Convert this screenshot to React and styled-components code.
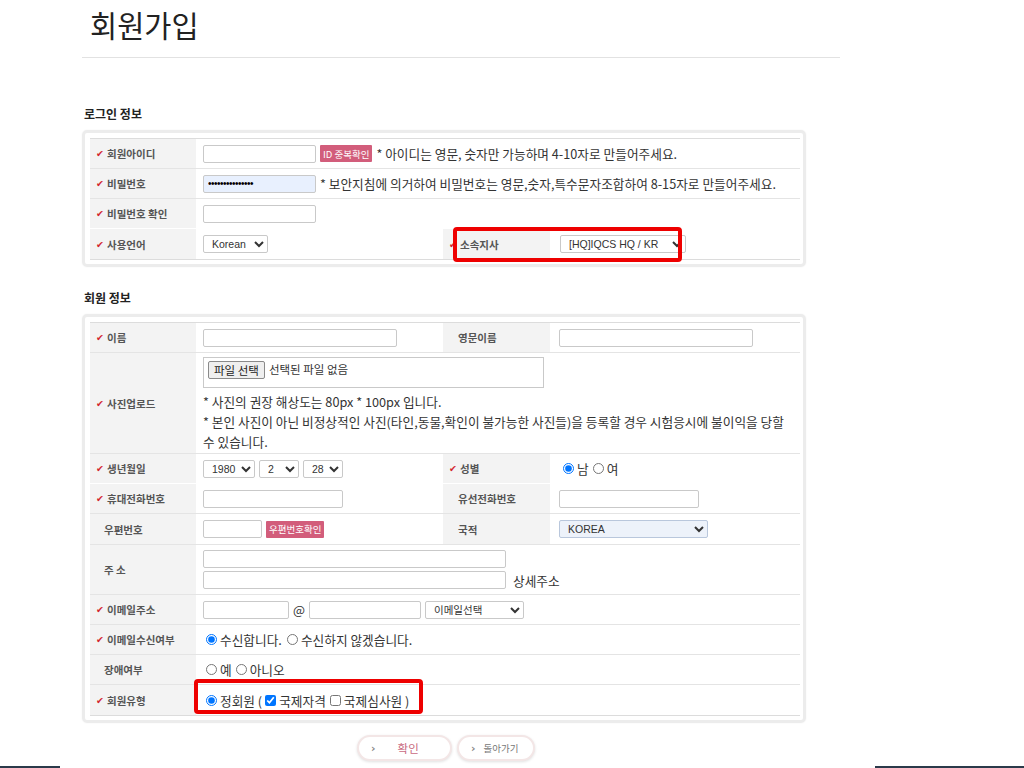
import React from 'react';
import styled, { createGlobalStyle } from 'styled-components';

const GlobalStyle = createGlobalStyle`
  html, body {
    margin: 0;
    padding: 0;
    background: #fff;
  }
  body {
    font-family: "Noto Sans CJK KR", "Noto Sans", sans-serif;
    color: #333;
  }
  * { box-sizing: border-box; }
`;

const Page = styled.div`
  width: 1024px;
  height: 768px;
  overflow: hidden;
  display: flex;
  flex-direction: column;
`;

const Content = styled.div`
  margin-left: 82px;
  width: 758px;
`;

const Title = styled.h1`
  margin: 0;
  height: 58px;
  padding: 3px 0 0 8px;
  font-size: 29.5px;
  font-weight: 400;
  color: #222;
  border-bottom: 1px solid #e2e2e2;
`;

const SectionTitle = styled.h2`
  margin: ${p => p.$top}px 0 0 2px;
  height: 24px;
  font-size: 12px;
  font-weight: 700;
  color: #222;
  line-height: 16px;
`;

const Frame = styled.div`
  width: 724px;
  border: 3px solid #ececec;
  border-radius: 5px;
  padding: 5px 3px 4px 5px;
  box-shadow: 0 0 2px rgba(0, 0, 0, 0.06);
`;

const Table = styled.div`
  border-top: 1px solid #dcdcdc;
  border-bottom: 1px solid #dcdcdc;
`;

const Row = styled.div`
  position: relative;
  display: grid;
  grid-template-columns: 106px 247px 107px 1fr;
  height: ${p => p.$h || 30}px;
  border-bottom: 1px solid ${p => (p.$noLine ? 'transparent' : '#e4e4e4')};
  &:last-child {
    border-bottom: none;
  }
`;

const Label = styled.div`
  display: flex;
  align-items: center;
  background: #f3f3f3;
  padding-left: ${p => (p.$req ? 6 : 14)}px;
  font-size: 10.5px;
  font-weight: 700;
  color: #555;
  white-space: nowrap;
`;

const SideLabel = styled(Label)`
  padding-left: ${p => (p.$req ? 6 : 15)}px;
`;

const Check = styled.span`
  font-family: "DejaVu Sans", sans-serif;
  color: #d3262f;
  font-size: 9.5px;
  width: 11px;
`;

const Field = styled.div`
  display: flex;
  align-items: center;
  gap: 4px;
  padding-left: ${p => p.$pad ?? 7}px;
  grid-column: ${p => (p.$span ? `span ${p.$span}` : 'auto')};
  font-size: 12.7px;
  color: #333;
  white-space: nowrap;
`;

const PhotoField = styled(Field)`
  flex-direction: column;
  align-items: flex-start;
  gap: 0;
  padding-top: 4px;
  white-space: normal;
`;

const AddressField = styled(Field)`
  flex-direction: column;
  align-items: flex-start;
  justify-content: center;
  gap: 3px;
`;

const Line = styled.div`
  display: flex;
  align-items: center;
  gap: 7px;
`;

const TextInput = styled.input`
  width: ${p => p.$w}px;
  height: 18px;
  border: 1px solid #c9c9c9;
  border-radius: 2px;
  background: ${p => (p.$filled ? '#e8f0fe' : '#fff')};
  font-size: 10px;
  padding: 0 4px;
  letter-spacing: ${p => (p.$filled ? '-0.5px' : '0')};
`;

const Select = styled.select`
  width: ${p => p.$w}px;
  height: 18px;
  border: 1px solid ${p => (p.$blue ? '#b9c7dc' : '#c9c9c9')};
  background: ${p => (p.$blue ? '#edf2fa' : '#fff')};
  border-radius: 2px;
  font-family: "Liberation Sans", Arial, "Noto Sans CJK KR", sans-serif;
  font-size: 10.5px;
  color: #333;
  padding: 0 2px 0 4px;
`;

const PinkButton = styled.span`
  display: inline-flex;
  align-items: center;
  height: 17px;
  padding: 0 3px;
  background: #d25d7b;
  color: #fff;
  font-size: 9.5px;
  border-radius: 1px;
`;

const Note = styled.span`
  font-size: 12.7px;
  color: #333;
`;

const FileBox = styled.div`
  width: 341px;
  height: 31px;
  border: 1px solid #c9c9c9;
  display: flex;
  align-items: flex-start;
  padding: 3px 4px;
  gap: 4px;
  font-size: 11.5px;
`;

const FileButton = styled.span`
  display: inline-flex;
  align-items: center;
  height: 18px;
  padding: 0 5px;
  border: 1px solid #8a8a8a;
  border-radius: 2px;
  background: #efefef;
  font-size: 11.5px;
  color: #222;
`;

const PhotoNotes = styled.div`
  margin-top: 4px;
  font-size: 12.7px;
  line-height: 20px;
  color: #333;
  width: 590px;
`;

const Choice = styled.label`
  display: inline-flex;
  align-items: center;
  font-size: 12.7px;
  color: #333;
  margin-right: ${p => p.$mr ?? 2}px;
  input {
    margin: 0 3px 0 ${p => p.$ml ?? 0}px;
    width: 11px;
    height: 11px;
  }
`;

const ChoiceGroup = styled(Field)`
  gap: 0;
`;

const Highlight = styled.div`
  position: absolute;
  left: ${p => p.$x}px;
  top: ${p => p.$y}px;
  width: ${p => p.$w}px;
  height: ${p => p.$h}px;
  border: 4px solid #ee0000;
  border-radius: 4px;
  pointer-events: none;
`;

const ButtonRow = styled.div`
  width: 724px;
  display: flex;
  justify-content: center;
  gap: 5px;
  margin-top: 12px;
  padding-left: 4px;
`;

const Pill = styled.div`
  width: ${p => p.$w}px;
  height: 26px;
  border: 2px solid #f3e6e6;
  border-radius: 14px;
  box-shadow: 0 1px 3px rgba(0, 0, 0, 0.12);
  display: flex;
  align-items: center;
  padding-left: 12px;
  gap: ${p => p.$gap}px;
  font-size: ${p => p.$fs}px;
  color: ${p => p.$color};
  background: #fff;
`;

const Chevron = styled.span`
  font-family: "DejaVu Sans", sans-serif;
  color: #888;
  font-size: 11px;
  font-weight: 700;
`;

const Footer = styled.div`
  margin-top: auto;
  display: flex;
  justify-content: space-between;
  height: 2px;
`;

const FooterBar = styled.div`
  width: ${p => p.$w}px;
  background: #2b3a4a;
`;

const Req = ({ children }) => (
  <>
    <Check>✔</Check>
    {children}
  </>
);

export default function App() {
  return (
    <Page>
      <GlobalStyle />
      <Content>
        <Title>회원가입</Title>

        <SectionTitle $top={48}>로그인 정보</SectionTitle>
        <Frame>
          <Table>
            <Row>
              <Label $req><Req>회원아이디</Req></Label>
              <Field $span={3}>
                <TextInput $w={113} />
                <PinkButton>ID 중복확인</PinkButton>
                <Note>* 아이디는 영문, 숫자만 가능하며 4-10자로 만들어주세요.</Note>
              </Field>
            </Row>
            <Row>
              <Label $req><Req>비밀번호</Req></Label>
              <Field $span={3}>
                <TextInput $w={113} $filled type="password" defaultValue="123456789012345" />
                <Note>* 보안지침에 의거하여 비밀번호는 영문,숫자,특수문자조합하여 8-15자로 만들어주세요.</Note>
              </Field>
            </Row>
            <Row $noLine>
              <Label $req><Req>비밀번호 확인</Req></Label>
              <Field $span={3}>
                <TextInput $w={113} />
              </Field>
            </Row>
            <Row>
              <Label $req><Req>사용언어</Req></Label>
              <Field>
                <Select $w={65} defaultValue="Korean">
                  <option>Korean</option>
                  <option>English</option>
                </Select>
              </Field>
              <SideLabel $req><Req>소속지사</Req></SideLabel>
              <Field $pad={10}>
                <Select $w={126}>
                  <option>[HQ]IQCS HQ / KR</option>
                </Select>
              </Field>
              <Highlight $x={363} $y={-2} $w={229} $h={35} />
            </Row>
          </Table>
        </Frame>

        <SectionTitle $top={23}>회원 정보</SectionTitle>
        <Frame>
          <Table>
            <Row>
              <Label $req><Req>이름</Req></Label>
              <Field><TextInput $w={194} /></Field>
              <SideLabel>영문이름</SideLabel>
              <Field $pad={9}><TextInput $w={194} /></Field>
            </Row>
            <Row $h={101}>
              <Label $req><Req>사진업로드</Req></Label>
              <PhotoField $span={3}>
                <FileBox>
                  <FileButton>파일 선택</FileButton>
                  <span>선택된 파일 없음</span>
                </FileBox>
                <PhotoNotes>
                  * 사진의 권장 해상도는 80px * 100px 입니다.<br />
                  * 본인 사진이 아닌 비정상적인 사진(타인,동물,확인이 불가능한 사진들)을 등록할 경우 시험응시에 불이익을 당할 수 있습니다.
                </PhotoNotes>
              </PhotoField>
            </Row>
            <Row $noLine>
              <Label $req><Req>생년월일</Req></Label>
              <Field>
                <Select $w={52}><option>1980</option></Select>
                <Select $w={40}><option>2</option></Select>
                <Select $w={40}><option>28</option></Select>
              </Field>
              <SideLabel $req><Req>성별</Req></SideLabel>
              <ChoiceGroup $pad={13}>
                <Choice $mr={4}><input type="radio" name="sex" defaultChecked />남</Choice>
                <Choice><input type="radio" name="sex" />여</Choice>
              </ChoiceGroup>
            </Row>
            <Row>
              <Label $req><Req>휴대전화번호</Req></Label>
              <Field><TextInput $w={140} /></Field>
              <SideLabel>유선전화번호</SideLabel>
              <Field $pad={9}><TextInput $w={140} /></Field>
            </Row>
            <Row $h={31}>
              <Label>우편번호</Label>
              <Field>
                <TextInput $w={59} />
                <PinkButton>우편번호확인</PinkButton>
              </Field>
              <SideLabel>국적</SideLabel>
              <Field $pad={9}>
                <Select $w={149} $blue><option>KOREA</option></Select>
              </Field>
            </Row>
            <Row $h={50}>
              <Label>주 소</Label>
              <AddressField $span={3}>
                <TextInput $w={303} />
                <Line>
                  <TextInput $w={303} />
                  <Note>상세주소</Note>
                </Line>
              </AddressField>
            </Row>
            <Row>
              <Label $req><Req>이메일주소</Req></Label>
              <Field $span={3}>
                <TextInput $w={86} />
                <Note>@</Note>
                <TextInput $w={112} />
                <Select $w={99}><option>이메일선택</option></Select>
              </Field>
            </Row>
            <Row>
              <Label $req><Req>이메일수신여부</Req></Label>
              <ChoiceGroup $span={3} $pad={10}>
                <Choice $mr={5}><input type="radio" name="mail" defaultChecked />수신합니다.</Choice>
                <Choice><input type="radio" name="mail" />수신하지 않겠습니다.</Choice>
              </ChoiceGroup>
            </Row>
            <Row>
              <Label>장애여부</Label>
              <ChoiceGroup $span={3} $pad={10}>
                <Choice $mr={4}><input type="radio" name="dis" />예</Choice>
                <Choice><input type="radio" name="dis" />아니오</Choice>
              </ChoiceGroup>
            </Row>
            <Row>
              <Label $req><Req>회원유형</Req></Label>
              <ChoiceGroup $span={3} $pad={10}>
                <Choice $mr={3}><input type="radio" name="type" defaultChecked />정회원 (</Choice>
                <Choice $mr={4}><input type="checkbox" defaultChecked />국제자격</Choice>
                <Choice><input type="checkbox" />국제심사원 )</Choice>
              </ChoiceGroup>
              <Highlight $x={104} $y={-6} $w={229} $h={35} />
            </Row>
          </Table>
        </Frame>

        <ButtonRow>
          <Pill $w={95} $gap={22} $fs={11.5} $color="#c96a7e">
            <Chevron>›</Chevron>확인
          </Pill>
          <Pill $w={78} $gap={8} $fs={9.5} $color="#777">
            <Chevron>›</Chevron>돌아가기
          </Pill>
        </ButtonRow>
      </Content>
      <Footer>
        <FooterBar $w={60} />
        <FooterBar $w={149} />
      </Footer>
    </Page>
  );
}
